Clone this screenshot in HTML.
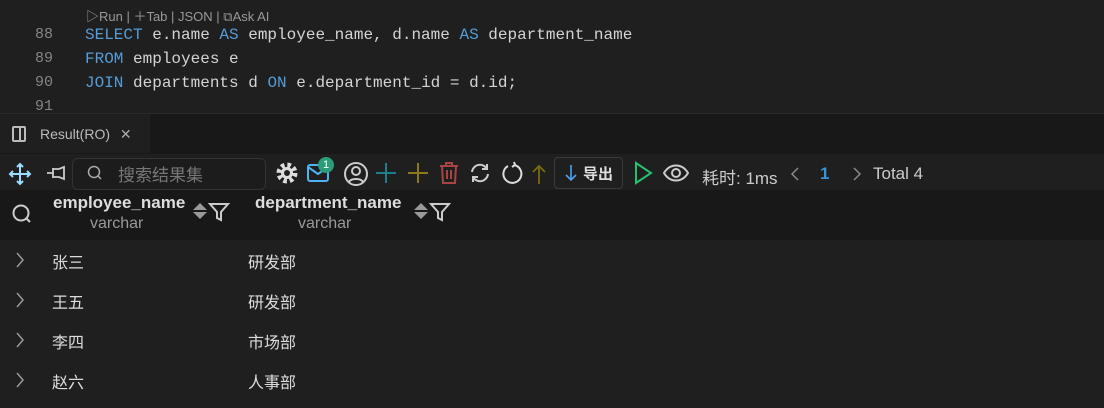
<!DOCTYPE html><html><head><meta charset="utf-8"><style>
body{margin:0;width:1104px;height:408px;background:#1f1f1f;overflow:hidden;font-family:"Liberation Sans","Noto Sans CJK SC",sans-serif;color:#ccc;position:relative}
.a{position:absolute;white-space:nowrap}
.code{font-family:"Liberation Mono",monospace;font-size:16px;color:#d4d4d4}
.ln{font-family:"Liberation Mono",monospace;font-size:15px;color:#858585;width:53px;text-align:right;left:0}
.k{color:#569cd6}
.cell{font-size:16px;color:#ddd}
svg{position:absolute;overflow:visible}
</style></head><body>
<div class="a" style="left:86px;top:6px;font-size:13px;color:#999">▷Run | ＋Tab | JSON | ⧉Ask AI</div>
<div class="a ln" style="top:26px">88</div><div class="a code" style="left:85px;top:26px"><span class="k">SELECT</span> e.name <span class="k">AS</span> employee_name, d.name <span class="k">AS</span> department_name</div>
<div class="a ln" style="top:50px">89</div><div class="a code" style="left:85px;top:50px"><span class="k">FROM</span> employees e</div>
<div class="a ln" style="top:74px">90</div><div class="a code" style="left:85px;top:74px"><span class="k">JOIN</span> departments d <span class="k">ON</span> e.department_id = d.id;</div>
<div class="a ln" style="top:98px">91</div>
<div class="a" style="left:0;top:113px;width:1104px;height:40px;background:#181818;border-top:1px solid #2b2b2b"></div>
<div class="a" style="left:0;top:114px;width:150px;height:39px;background:#1f1f1f"></div>
<div class="a" style="left:12px;top:126px;width:14px;height:16px;border:2px solid #bbb;border-radius:2px;box-sizing:border-box"></div>
<div class="a" style="left:19px;top:126px;width:2px;height:16px;background:#bbb"></div>
<div class="a" style="left:40px;top:126px;font-size:14px;color:#bbb">Result(RO) <span style="margin-left:6px;color:#aaa">✕</span></div>
<!-- toolbar -->
<svg style="left:9px;top:163px" width="22" height="22" viewBox="0 0 22 22" fill="none" stroke="#9cdcfe" stroke-width="2"><path d="M11 1v20M1 11h20M8 4l3-3 3 3M8 18l3 3 3-3M4 8l-3 3 3 3M18 8l3 3-3 3"/></svg>
<svg style="left:46px;top:165px" width="20" height="16" viewBox="0 0 20 16" fill="none" stroke="#ccc" stroke-width="1.8"><path d="M1 8h6M7 3v10M7 4h6l5-2v12l-5-2H7"/></svg>
<div class="a" style="left:72px;top:158px;width:192px;height:30px;border:1px solid #333;border-radius:6px;background:#1c1c1c"></div>
<svg style="left:87px;top:165px" width="16" height="16" viewBox="0 0 16 16" fill="none" stroke="#aaa" stroke-width="1.5"><circle cx="7" cy="7" r="5.5"/><path d="M11 11l3 3"/></svg>
<div class="a" style="left:118px;top:161px;font-size:17px;color:#777">搜索结果集</div>
<svg style="left:276px;top:162px" width="22" height="22" viewBox="0 0 22 22"><circle cx="11" cy="11" r="8" fill="none" stroke="#ddd" stroke-width="5" stroke-dasharray="3.5 2.8"/><circle cx="11" cy="11" r="6" fill="#ddd"/><circle cx="11" cy="11" r="3" fill="#1f1f1f"/></svg>
<svg style="left:307px;top:164px" width="22" height="18" viewBox="0 0 22 18" fill="none" stroke="#4fb3f0" stroke-width="2"><rect x="1" y="1" width="20" height="16" rx="2"/><path d="M1 3l10 7 10-7"/></svg>
<div class="a" style="left:318px;top:157px;width:16px;height:16px;border-radius:50%;background:#2a9d78;font-size:11px;color:#fff;text-align:center;line-height:16px">1</div>
<svg style="left:344px;top:162px" width="24" height="24" viewBox="0 0 24 24" fill="none" stroke="#ccc" stroke-width="2"><circle cx="12" cy="12" r="11"/><circle cx="12" cy="9" r="4"/><path d="M5 20c2-4 12-4 14 0"/></svg>
<svg style="left:376px;top:163px" width="20" height="20" stroke="#1d7f8c" stroke-width="2"><path d="M10 0v20M0 10h20"/></svg>
<svg style="left:408px;top:163px" width="20" height="20" stroke="#8a7a1a" stroke-width="2"><path d="M10 0v20M0 10h20"/></svg>
<svg style="left:439px;top:161px" width="20" height="24" viewBox="0 0 20 24" fill="none" stroke="#a84444" stroke-width="2"><path d="M1 5h18M7 5V2h6v3M3 5l1 17h12l1-17M8 9v9M12 9v9"/></svg>
<svg style="left:469px;top:163px" width="22" height="20" viewBox="0 0 22 20" fill="none" stroke="#ccc" stroke-width="2"><path d="M3 9a8 8 0 0 1 15-3M19 11a8 8 0 0 1-15 3M18 1v5h-5M4 19v-5h5"/></svg>
<svg style="left:501px;top:162px" width="22" height="22" viewBox="0 0 22 22" fill="none" stroke="#ddd" stroke-width="2"><path d="M7 4a9 9 0 1 0 6-1M13 0l1 3-3 2"/></svg>
<svg style="left:531px;top:164px" width="16" height="20" fill="none" stroke="#7a6a10" stroke-width="1.8"><path d="M8 20V2M2 8l6-6 6 6"/></svg>
<div class="a" style="left:554px;top:157px;width:67px;height:30px;border:1px solid #3a3a3a;border-radius:4px"></div>
<svg style="left:565px;top:165px" width="12" height="16" fill="none" stroke="#4fa0f0" stroke-width="1.6"><path d="M6 0v15M1 10l5 5 5-5"/></svg>
<div class="a" style="left:583px;top:163px;font-size:15px;font-weight:bold;color:#ddd">导出</div>
<svg style="left:634px;top:162px" width="18" height="22" fill="none" stroke="#25c26e" stroke-width="2"><path d="M2 1l15 10L2 21z"/></svg>
<svg style="left:663px;top:164px" width="26" height="18" viewBox="0 0 26 18" fill="none" stroke="#ccc" stroke-width="2"><path d="M1 9c6-10 18-10 24 0c-6 10-18 10-24 0z"/><circle cx="13" cy="9" r="4"/></svg>
<div class="a" style="left:702px;top:164px;font-size:17px;color:#ccc">耗时: 1ms</div>
<svg style="left:791px;top:168px" width="8" height="12" fill="none" stroke="#888" stroke-width="1.5"><path d="M7 0L1 6l6 6"/></svg>
<div class="a" style="left:820px;top:164px;font-size:17px;font-weight:bold;color:#3794d6">1</div>
<svg style="left:853px;top:168px" width="8" height="12" fill="none" stroke="#888" stroke-width="1.5"><path d="M1 0l6 6-6 6"/></svg>
<div class="a" style="left:873px;top:164px;font-size:17px;color:#ccc">Total 4</div>
<!-- header -->
<div class="a" style="left:0;top:190px;width:1104px;height:50px;background:#181818"></div>
<svg style="left:12px;top:204px" width="20" height="20" fill="none" stroke="#ccc" stroke-width="2"><circle cx="9" cy="9" r="7.5"/><path d="M14 14l4 4"/></svg>
<div class="a" style="left:53px;top:193px;font-size:17px;font-weight:bold;color:#ddd">employee_name</div>
<div class="a" style="left:90px;top:215px;font-size:16px;color:#999">varchar</div>
<svg style="left:193px;top:202px" width="14" height="18"><path d="M0 8L7 1l7 7z M0 10l7 7 7-7z" fill="#999"/></svg>
<svg style="left:209px;top:203px" width="20" height="18" fill="none" stroke="#ccc" stroke-width="2"><path d="M1 1h18l-7 8v8l-4-2V9z"/></svg>
<div class="a" style="left:255px;top:193px;font-size:17px;font-weight:bold;color:#ddd">department_name</div>
<div class="a" style="left:298px;top:215px;font-size:16px;color:#999">varchar</div>
<svg style="left:414px;top:202px" width="14" height="18"><path d="M0 8L7 1l7 7z M0 10l7 7 7-7z" fill="#999"/></svg>
<svg style="left:430px;top:203px" width="20" height="18" fill="none" stroke="#ccc" stroke-width="2"><path d="M1 1h18l-7 8v8l-4-2V9z"/></svg>
<!-- rows -->
<svg style="left:16px;top:253px" width="8" height="14" fill="none" stroke="#999" stroke-width="1.5"><path d="M1 0l6 7-6 7"/></svg><div class="a cell" style="left:52px;top:249px">张三</div><div class="a cell" style="left:248px;top:249px">研发部</div>
<svg style="left:16px;top:293px" width="8" height="14" fill="none" stroke="#999" stroke-width="1.5"><path d="M1 0l6 7-6 7"/></svg><div class="a cell" style="left:52px;top:289px">王五</div><div class="a cell" style="left:248px;top:289px">研发部</div>
<svg style="left:16px;top:333px" width="8" height="14" fill="none" stroke="#999" stroke-width="1.5"><path d="M1 0l6 7-6 7"/></svg><div class="a cell" style="left:52px;top:329px">李四</div><div class="a cell" style="left:248px;top:329px">市场部</div>
<svg style="left:16px;top:373px" width="8" height="14" fill="none" stroke="#999" stroke-width="1.5"><path d="M1 0l6 7-6 7"/></svg><div class="a cell" style="left:52px;top:369px">赵六</div><div class="a cell" style="left:248px;top:369px">人事部</div>
</body></html>
